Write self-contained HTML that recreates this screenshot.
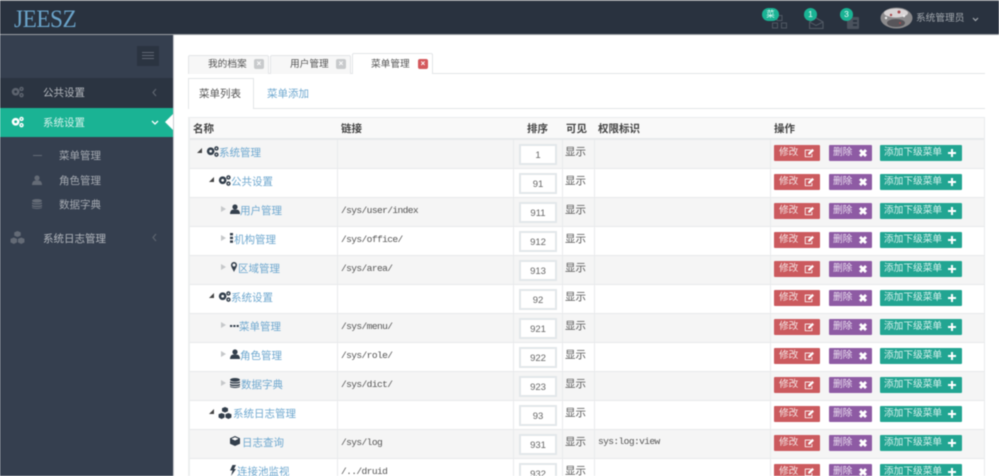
<!DOCTYPE html>
<html lang="zh"><head><meta charset="utf-8"><title>JEESZ</title>
<style>
*{box-sizing:border-box}
html,body{margin:0;padding:0;width:999px;height:476px;overflow:hidden;background:#fff}
body{font-family:"Liberation Sans","WenQuanYi Zen Hei","Noto Sans CJK SC",sans-serif;font-size:10.5px;color:#555;position:relative}
#w{position:absolute;left:0;top:0;width:999px;height:476px;overflow:hidden;filter:blur(.45px)}
.a{position:absolute;white-space:nowrap}
.top{left:0;top:0;width:999px;height:35px;background:#29323f;border-top:1px solid #8a8d91;border-bottom:1px solid #9a9ea3}
.side{left:0;top:35px;width:173px;height:441px;background:#353f4f}
.sline{left:173px;top:35px;width:1px;height:441px;background:#c9ccd0}
.nav{left:43px;color:#b4b8be;font-size:10.5px;line-height:14px;margin-top:1px}
.sub{left:59px;color:#a5aab1;font-size:10.5px;line-height:14px;margin-top:1px}
.tab{height:19px;top:55px;border:1px solid #e3e5e7;border-bottom:0;background:#f7f7f7;border-radius:2px 2px 0 0;font-size:9.7px;color:#555;line-height:17px}
.x{position:absolute;top:3px;width:10px;height:10px;background:#c8cacc;border-radius:2px;color:#fff;font-size:8px;line-height:10px;text-align:center;font-weight:bold}
.r{left:188px;width:797px;height:29px;margin-top:1px;border-bottom:1px solid #e7e9eb}
.o{background:#f5f5f5}.e{background:#fff}
.v{top:0;width:1px;height:29px;background:#e9ebed}
.n{color:#6fa8cf;font-size:10.5px;line-height:14px;top:6px}
.l{left:153px;top:6px;font:9.6px/14px "Liberation Mono",monospace;letter-spacing:-.62px;color:#555}
.in{left:331px;top:4px;width:38px;height:21px;background:#fff;border:2px solid #e3e7ea;text-align:center;font-size:9.5px;line-height:19px;color:#666}
.s{left:377px;top:5px;font-size:10.5px;line-height:14px;color:#555}
.b{top:5px;height:16px;color:#f3e3e3;font-size:9.7px;line-height:16px;border-radius:1px}
.b1{left:586px;width:46px;background:#cb5a5e;padding-left:5px}
.b2{left:641px;width:43px;background:#8e5ba4;padding-left:4px;color:#eadff0}
.b3{left:692px;width:82px;background:#22a592;padding-left:4px;color:#d5f0ec}
.b svg{position:absolute;top:3px;width:10px;height:10px;fill:#fff}
.ar{width:0;height:0;top:8px}
.dn{border-left:5px solid transparent;border-bottom:5px solid #444}
.rt{top:8px;border-left:5px solid #c6c8ca;border-top:3.5px solid transparent;border-bottom:3.5px solid transparent}
.i{top:6px;fill:#333f4c}
.th{top:118px;height:22px;font-weight:bold;color:#444;line-height:22px;font-size:10.5px}
</style></head><body><div id="w">
<svg width="0" height="0" style="position:absolute"><defs>
<symbol id="cog" viewBox="0 0 14 12"><path d="M5 1.500a4.200 4.200 0 1 0 0 8.400 4.200 4.200 0 0 0 0-8.400zm0 2.700a1.500 1.500 0 1 1 0 3 1.500 1.500 0 0 1 0-3z"/><path d="M11.300 .3a2.400 2.400 0 1 0 0 4.800 2.400 2.400 0 0 0 0-4.800zm0 1.600a.8.8 0 1 1 0 1.600.8.8 0 0 1 0-1.600zM11.300 7a2.400 2.400 0 1 0 0 4.800 2.400 2.400 0 0 0 0-4.800zm0 1.600a.8.8 0 1 1 0 1.600.8.8 0 0 1 0-1.600z"/></symbol>
<symbol id="usr" viewBox="0 0 10 10"><circle cx="5" cy="3" r="2.600"/><path d="M0 10c0-3 1.500-4.400 3-4.400h4c1.500 0 3 1.400 3 4.400z"/></symbol>
<symbol id="cub" viewBox="0 0 16 14"><path d="M8 0l3.500 1.500v3.500L8 6.500 4.500 5V1.500zM4 7l3.500 1.500v3.800L4 14 .5 12.300V8.500zM12 7l3.500 1.500v3.800L12 14l-3.500-1.700V8.500z"/></symbol>
<symbol id="db" viewBox="0 0 10 10"><ellipse cx="5" cy="1.800" rx="5" ry="1.800"/><path d="M0 3.200c1 1.300 9 1.300 10 0v1.500c-1 1.300-9 1.300-10 0zM0 5.700c1 1.300 9 1.300 10 0v1.500c-1 1.300-9 1.300-10 0zM0 8c1 1.300 9 1.300 10 0v.6C9 10.400 1 10.400 0 8.600z"/></symbol>
<symbol id="pin" viewBox="0 0 6 10"><path d="M3 0a3 3 0 0 1 3 3c0 2-2 4.500-3 7C2 7.500 0 5 0 3a3 3 0 0 1 3-3zm0 1.500a1.500 1.500 0 1 0 0 3 1.500 1.500 0 0 0 0-3z"/></symbol>
<symbol id="edit" viewBox="0 0 12 10"><path d="M1 1h7v1H2v7h7V6h1v4H1z"/><path d="M5 5l5-5 2 2-5 5H5z"/></symbol>
<symbol id="del" viewBox="0 0 10 10"><path d="M1 3l2-2 2 2 2-2 2 2-2 2 2 2-2 2-2-2-2 2-2-2 2-2z"/></symbol>
<symbol id="add" viewBox="0 0 10 10"><path d="M4 1h2v3h3v2H6v3H4V6H1V4h3z"/></symbol>
</defs></svg>

<div class="a top"></div>
<div class="a" style="left:14px;top:5px;font:25px/30px 'Liberation Serif',serif;color:#6aa3c9;letter-spacing:-.5px;transform:scaleX(.93);transform-origin:left">JEESZ</div>

<svg class="a" style="left:772px;top:15px;fill:none;stroke:#4f5762" width="16" height="14"><rect x="5" y=".5" width="5" height="5"/><rect x=".5" y="8" width="5" height="5"/><rect x="9.500" y="8" width="5" height="5"/></svg>
<div class="a" style="left:762px;top:8px;width:17px;height:13px;border-radius:7px;background:#1ab394;color:#e8fbf7;font-size:8.5px;line-height:13px;text-align:center">菜</div>
<svg class="a" style="left:809px;top:17px;fill:none;stroke:#4f5762;stroke-width:1.200" width="15" height="12"><path d="M.6 5L7 .8 14 5v6.500H.6zM.6 5L7 8.500 14 5"/></svg>
<div class="a" style="left:804px;top:8px;width:13px;height:13px;border-radius:7px;background:#1ab394;color:#e8fbf7;font-size:8.5px;line-height:13px;text-align:center">1</div>
<svg class="a" style="left:846px;top:15px;fill:#4a525d" width="14" height="14"><rect x="1" y="2" width="12" height="12" rx="1"/><rect x="7" y="5" width="4" height="2" fill="#29323f"/><rect x="7" y="9" width="4" height="2" fill="#29323f"/></svg>
<div class="a" style="left:840px;top:8px;width:13px;height:13px;border-radius:7px;background:#1ab394;color:#e8fbf7;font-size:8.5px;line-height:13px;text-align:center">3</div>
<svg class="a" style="left:880px;top:7px" width="33" height="22"><ellipse cx="16.500" cy="11" rx="16" ry="10.500" fill="#8b8a8c"/><ellipse cx="16" cy="6" rx="12" ry="4.500" fill="#d8d4d5"/><circle cx="19" cy="5" r="1.500" fill="#a8474c"/><circle cx="11" cy="8" r="1.200" fill="#a8474c"/><circle cx="24" cy="9" r="1.200" fill="#eee"/><circle cx="6" cy="11" r="1.200" fill="#eee"/><ellipse cx="16" cy="16" rx="9" ry="4" fill="#57555a"/><circle cx="20" cy="16" r="1" fill="#a8474c"/></svg>
<div class="a" style="left:916px;top:12px;font-size:9.7px;line-height:14px;color:#a3a8ae">系统管理员</div>
<svg class="a" style="left:972px;top:17px;fill:none;stroke:#a3a8ae;stroke-width:1.200" width="7" height="5"><path d="M1 1l2.500 2.500L6 1"/></svg>

<div class="a side"></div><div class="a sline"></div>
<div class="a" style="left:137px;top:46px;width:22px;height:20px;background:#2b3441"></div>
<div class="a" style="left:142px;top:52px;width:12px;height:1px;background:#5e6672"></div>
<div class="a" style="left:142px;top:55px;width:12px;height:1px;background:#5e6672"></div>
<div class="a" style="left:142px;top:58px;width:12px;height:1px;background:#5e6672"></div>
<div class="a" style="left:0;top:78px;width:173px;height:30px;background:#2b3441"></div>
<svg class="a" style="left:11px;top:86px;fill:#5d646f" width="13" height="12"><use href="#cog"/></svg>
<div class="a nav" style="top:85px">公共设置</div>
<svg class="a" style="left:152px;top:88px;fill:none;stroke:#5d646f;stroke-width:1.200" width="5" height="9"><path d="M4 1L1 4.500 4 8"/></svg>
<div class="a" style="left:0;top:108px;width:173px;height:29px;background:#1ab394"></div>
<svg class="a" style="left:11px;top:116px;fill:#fff" width="13" height="12"><use href="#cog"/></svg>
<div class="a nav" style="top:115px;color:#d6f2ec">系统设置</div>
<svg class="a" style="left:151px;top:120px;fill:none;stroke:#fff;stroke-width:1.300" width="8" height="6"><path d="M1 1l3 3 3-3"/></svg>
<div class="a" style="left:165px;top:114px;width:0;height:0;border-top:8px solid transparent;border-bottom:8px solid transparent;border-right:8px solid #fff"></div>
<div class="a" style="left:33px;top:155px;width:9px;height:1px;background:#646b76"></div>
<div class="a sub" style="top:148px">菜单管理</div>
<svg class="a" style="left:32px;top:175px;fill:#646b76" width="10" height="10"><use href="#usr"/></svg>
<div class="a sub" style="top:173px">角色管理</div>
<svg class="a" style="left:32px;top:199px;fill:#646b76" width="10" height="10"><use href="#db"/></svg>
<div class="a sub" style="top:197px">数据字典</div>
<svg class="a" style="left:10px;top:231px;fill:#646b76" width="15" height="13"><use href="#cub"/></svg>
<div class="a nav" style="top:231px">系统日志管理</div>
<svg class="a" style="left:152px;top:233px;fill:none;stroke:#5d646f;stroke-width:1.200" width="5" height="9"><path d="M4 1L1 4.500 4 8"/></svg>

<div class="a" style="left:188px;top:73px;width:797px;height:1px;background:#e3e5e7"></div>
<div class="a tab" style="left:188px;width:81px"><span class="a" style="left:19px">我的档案</span><span class="x" style="left:65px">×</span></div>
<div class="a tab" style="left:270px;width:81px"><span class="a" style="left:19px">用户管理</span><span class="x" style="left:65px">×</span></div>
<div class="a tab" style="left:352px;width:81px;top:53px;height:21px;background:#fff"><span class="a" style="left:18px;top:2px">菜单管理</span><span class="x" style="left:65px;top:5px;background:#d4595d">×</span></div>

<div class="a" style="left:188px;top:108px;width:797px;height:1px;background:#e3e5e7"></div>
<div class="a" style="left:188px;top:78px;width:66px;height:31px;border:1px solid #e3e5e7;border-bottom:0;background:#fff"></div>
<div class="a" style="left:199px;top:87px;font-size:10.5px;line-height:14px;color:#555">菜单列表</div>
<div class="a" style="left:267px;top:87px;font-size:10.5px;line-height:14px;color:#6fa8cf">菜单添加</div>

<div class="a" style="left:188px;top:117px;width:797px;height:23px;background:#f9f9f9;border:1px solid #e9ebed;border-bottom:2px solid #e7e9eb"></div>
<div class="a th" style="left:193px">名称</div><div class="a th" style="left:341px">链接</div><div class="a th" style="left:527px">排序</div><div class="a th" style="left:566px">可见</div><div class="a th" style="left:598px">权限标识</div><div class="a th" style="left:774px">操作</div>

<div class="a r o" style="top:139px"><div class="a n" style="left:31px">系统管理</div><div class="a ar dn" style="left:9px"></div><svg class="a i" style="left:18px" width="13" height="11"><use href="#cog"/></svg><div class="a v" style="left:149px"></div><div class="a v" style="left:325px"></div><div class="a v" style="left:374px"></div><div class="a v" style="left:406px"></div><div class="a v" style="left:582px"></div><div class="a in">1</div><div class="a s">显示</div><div class="a b b1">修改<svg style="left:30px"><use href="#edit"/></svg></div><div class="a b b2">删除<svg style="left:29px"><use href="#del"/></svg></div><div class="a b b3">添加下级菜单<svg style="left:67px"><use href="#add"/></svg></div></div>
<div class="a r e" style="top:168px"><div class="a n" style="left:43px">公共设置</div><div class="a ar dn" style="left:21px"></div><svg class="a i" style="left:30px" width="13" height="11"><use href="#cog"/></svg><div class="a v" style="left:149px"></div><div class="a v" style="left:325px"></div><div class="a v" style="left:374px"></div><div class="a v" style="left:406px"></div><div class="a v" style="left:582px"></div><div class="a in">91</div><div class="a s">显示</div><div class="a b b1">修改<svg style="left:30px"><use href="#edit"/></svg></div><div class="a b b2">删除<svg style="left:29px"><use href="#del"/></svg></div><div class="a b b3">添加下级菜单<svg style="left:67px"><use href="#add"/></svg></div></div>
<div class="a r o" style="top:197px"><div class="a n" style="left:52px">用户管理</div><div class="a ar rt" style="left:33px"></div><svg class="a i" style="left:42px" width="10" height="10"><use href="#usr"/></svg><div class="a l">/sys/user/index</div><div class="a v" style="left:149px"></div><div class="a v" style="left:325px"></div><div class="a v" style="left:374px"></div><div class="a v" style="left:406px"></div><div class="a v" style="left:582px"></div><div class="a in">911</div><div class="a s">显示</div><div class="a b b1">修改<svg style="left:30px"><use href="#edit"/></svg></div><div class="a b b2">删除<svg style="left:29px"><use href="#del"/></svg></div><div class="a b b3">添加下级菜单<svg style="left:67px"><use href="#add"/></svg></div></div>
<div class="a r e" style="top:226px"><div class="a n" style="left:46px">机构管理</div><div class="a ar rt" style="left:33px"></div><svg class="a i" style="left:42px" width="3" height="10"><rect width="3" height="2.400"/><rect y="3.700" width="3" height="2.400"/><rect y="7.400" width="3" height="2.400"/></svg><div class="a l">/sys/office/</div><div class="a v" style="left:149px"></div><div class="a v" style="left:325px"></div><div class="a v" style="left:374px"></div><div class="a v" style="left:406px"></div><div class="a v" style="left:582px"></div><div class="a in">912</div><div class="a s">显示</div><div class="a b b1">修改<svg style="left:30px"><use href="#edit"/></svg></div><div class="a b b2">删除<svg style="left:29px"><use href="#del"/></svg></div><div class="a b b3">添加下级菜单<svg style="left:67px"><use href="#add"/></svg></div></div>
<div class="a r o" style="top:255px"><div class="a n" style="left:50px">区域管理</div><div class="a ar rt" style="left:33px"></div><svg class="a i" style="left:43px" width="6" height="10"><use href="#pin"/></svg><div class="a l">/sys/area/</div><div class="a v" style="left:149px"></div><div class="a v" style="left:325px"></div><div class="a v" style="left:374px"></div><div class="a v" style="left:406px"></div><div class="a v" style="left:582px"></div><div class="a in">913</div><div class="a s">显示</div><div class="a b b1">修改<svg style="left:30px"><use href="#edit"/></svg></div><div class="a b b2">删除<svg style="left:29px"><use href="#del"/></svg></div><div class="a b b3">添加下级菜单<svg style="left:67px"><use href="#add"/></svg></div></div>
<div class="a r e" style="top:284px"><div class="a n" style="left:43px">系统设置</div><div class="a ar dn" style="left:21px"></div><svg class="a i" style="left:30px" width="13" height="11"><use href="#cog"/></svg><div class="a v" style="left:149px"></div><div class="a v" style="left:325px"></div><div class="a v" style="left:374px"></div><div class="a v" style="left:406px"></div><div class="a v" style="left:582px"></div><div class="a in">92</div><div class="a s">显示</div><div class="a b b1">修改<svg style="left:30px"><use href="#edit"/></svg></div><div class="a b b2">删除<svg style="left:29px"><use href="#del"/></svg></div><div class="a b b3">添加下级菜单<svg style="left:67px"><use href="#add"/></svg></div></div>
<div class="a r o" style="top:313px"><div class="a n" style="left:51px">菜单管理</div><div class="a ar rt" style="left:33px"></div><svg class="a i" style="left:42px;top:11px" width="9" height="3"><rect width="2.200" height="2"/><rect x="3.300" width="2.200" height="2"/><rect x="6.600" width="2.200" height="2"/></svg><div class="a l">/sys/menu/</div><div class="a v" style="left:149px"></div><div class="a v" style="left:325px"></div><div class="a v" style="left:374px"></div><div class="a v" style="left:406px"></div><div class="a v" style="left:582px"></div><div class="a in">921</div><div class="a s">显示</div><div class="a b b1">修改<svg style="left:30px"><use href="#edit"/></svg></div><div class="a b b2">删除<svg style="left:29px"><use href="#del"/></svg></div><div class="a b b3">添加下级菜单<svg style="left:67px"><use href="#add"/></svg></div></div>
<div class="a r e" style="top:342px"><div class="a n" style="left:52px">角色管理</div><div class="a ar rt" style="left:33px"></div><svg class="a i" style="left:42px" width="10" height="10"><use href="#usr"/></svg><div class="a l">/sys/role/</div><div class="a v" style="left:149px"></div><div class="a v" style="left:325px"></div><div class="a v" style="left:374px"></div><div class="a v" style="left:406px"></div><div class="a v" style="left:582px"></div><div class="a in">922</div><div class="a s">显示</div><div class="a b b1">修改<svg style="left:30px"><use href="#edit"/></svg></div><div class="a b b2">删除<svg style="left:29px"><use href="#del"/></svg></div><div class="a b b3">添加下级菜单<svg style="left:67px"><use href="#add"/></svg></div></div>
<div class="a r o" style="top:371px"><div class="a n" style="left:53px">数据字典</div><div class="a ar rt" style="left:33px"></div><svg class="a i" style="left:42px" width="10" height="10"><use href="#db"/></svg><div class="a l">/sys/dict/</div><div class="a v" style="left:149px"></div><div class="a v" style="left:325px"></div><div class="a v" style="left:374px"></div><div class="a v" style="left:406px"></div><div class="a v" style="left:582px"></div><div class="a in">923</div><div class="a s">显示</div><div class="a b b1">修改<svg style="left:30px"><use href="#edit"/></svg></div><div class="a b b2">删除<svg style="left:29px"><use href="#del"/></svg></div><div class="a b b3">添加下级菜单<svg style="left:67px"><use href="#add"/></svg></div></div>
<div class="a r e" style="top:400px"><div class="a n" style="left:45px">系统日志管理</div><div class="a ar dn" style="left:21px"></div><svg class="a i" style="left:30px" width="14" height="12"><use href="#cub"/></svg><div class="a v" style="left:149px"></div><div class="a v" style="left:325px"></div><div class="a v" style="left:374px"></div><div class="a v" style="left:406px"></div><div class="a v" style="left:582px"></div><div class="a in">93</div><div class="a s">显示</div><div class="a b b1">修改<svg style="left:30px"><use href="#edit"/></svg></div><div class="a b b2">删除<svg style="left:29px"><use href="#del"/></svg></div><div class="a b b3">添加下级菜单<svg style="left:67px"><use href="#add"/></svg></div></div>
<div class="a r o" style="top:429px"><div class="a n" style="left:54px">日志查询</div><svg class="a i" style="left:42px" width="10" height="10"><path d="M5 0l5 2.300v5.400L5 10 0 7.700V2.300z"/><path d="M5 4.500L1.500 2.800 5 1.200l3.500 1.600z" fill="#fff"/></svg><div class="a l">/sys/log</div><div class="a v" style="left:149px"></div><div class="a v" style="left:325px"></div><div class="a v" style="left:374px"></div><div class="a v" style="left:406px"></div><div class="a v" style="left:582px"></div><div class="a in">931</div><div class="a s">显示</div><div class="a l" style="left:410px;top:5px;color:#555">sys:log:view</div><div class="a b b1">修改<svg style="left:30px"><use href="#edit"/></svg></div><div class="a b b2">删除<svg style="left:29px"><use href="#del"/></svg></div><div class="a b b3">添加下级菜单<svg style="left:67px"><use href="#add"/></svg></div></div>
<div class="a r e" style="top:458px"><div class="a n" style="left:49px">连接池监视</div><svg class="a i" style="left:42px" width="6" height="11"><path d="M2.500 0H6L4 4h2L1 11l1.500-5.500H0z"/></svg><div class="a l">/../druid</div><div class="a v" style="left:149px"></div><div class="a v" style="left:325px"></div><div class="a v" style="left:374px"></div><div class="a v" style="left:406px"></div><div class="a v" style="left:582px"></div><div class="a in">932</div><div class="a s">显示</div><div class="a b b1">修改<svg style="left:30px"><use href="#edit"/></svg></div><div class="a b b2">删除<svg style="left:29px"><use href="#del"/></svg></div><div class="a b b3">添加下级菜单<svg style="left:67px"><use href="#add"/></svg></div></div>

<div class="a" style="left:188px;top:117px;width:2px;height:359px;background:#eceeef"></div>
<div class="a" style="left:984px;top:117px;width:1px;height:359px;background:#e9ebed"></div>
</div></body></html>
